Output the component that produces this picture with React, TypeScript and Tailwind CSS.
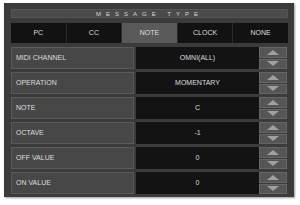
const TABS = ["PC", "CC", "NOTE", "CLOCK", "NONE"];

const ROWS = [
  { label: "MIDI CHANNEL", value: "OMNI(ALL)" },
  { label: "OPERATION", value: "MOMENTARY" },
  { label: "NOTE", value: "C" },
  { label: "OCTAVE", value: "-1" },
  { label: "OFF VALUE", value: "0" },
  { label: "ON VALUE", value: "0" },
];

function Arrow({ up }: { up?: boolean }) {
  return (
    <svg width="12" height="5" viewBox="0 0 12 5" className="block">
      <polygon points={up ? "6,0 12,5 0,5" : "0,0 12,0 6,5"} fill="#a0a0a0" />
    </svg>
  );
}

function Spinner() {
  return (
    <div className="flex w-[28px] flex-col gap-px bg-[#3a3a3a]">
      <div className="flex flex-1 items-center justify-center border border-[#666] bg-[#555]">
        <Arrow up />
      </div>
      <div className="flex flex-1 items-center justify-center border border-[#666] bg-[#555]">
        <Arrow />
      </div>
    </div>
  );
}

export default function App() {
  return (
    <div
      className="h-[205px] w-[300px] bg-white pl-[4px] pt-[3px] text-[#dedede]"
      style={{ fontFamily: '"Liberation Sans", Arial, sans-serif' }}
    >
      <div className="flex h-[194px] w-[290px] flex-col bg-[#3b3b3b] pl-[7px] pt-[6px] shadow-[1px_1px_2px_rgba(0,0,0,0.4)]">
        <div className="flex h-[9px] w-[277px] items-center justify-center border border-[#555] bg-[#4b4b4b] text-[6px] leading-none tracking-[5px] text-[#d8d8d8]">
          MESSAGE TYPE
        </div>

        <div className="mt-[5px] flex h-[20px] w-[277px] gap-px bg-[#2a2a2a]">
          {TABS.map((t) => (
            <div
              key={t}
              className={
                t === "NOTE"
                  ? "flex flex-1 items-center justify-center bg-[#5a5a5a] text-[7px]"
                  : "flex flex-1 items-center justify-center bg-[#121212] text-[7px]"
              }
            >
              {t}
            </div>
          ))}
        </div>

        <div className="mt-[4px] flex flex-col gap-[3px]">
          {ROWS.map((r) => (
            <div key={r.label} className="flex h-[22px] w-[276px]">
              <div className="flex w-[123px] items-center border border-[#5a5a5a] bg-[#474747] pl-[4px] text-[7px]">
                {r.label}
              </div>
              <div className="ml-[2px] flex w-[123px] items-center justify-center bg-[#131313] text-[7px]">
                {r.value}
              </div>
              <Spinner />
            </div>
          ))}
        </div>
      </div>
    </div>
  );
}
